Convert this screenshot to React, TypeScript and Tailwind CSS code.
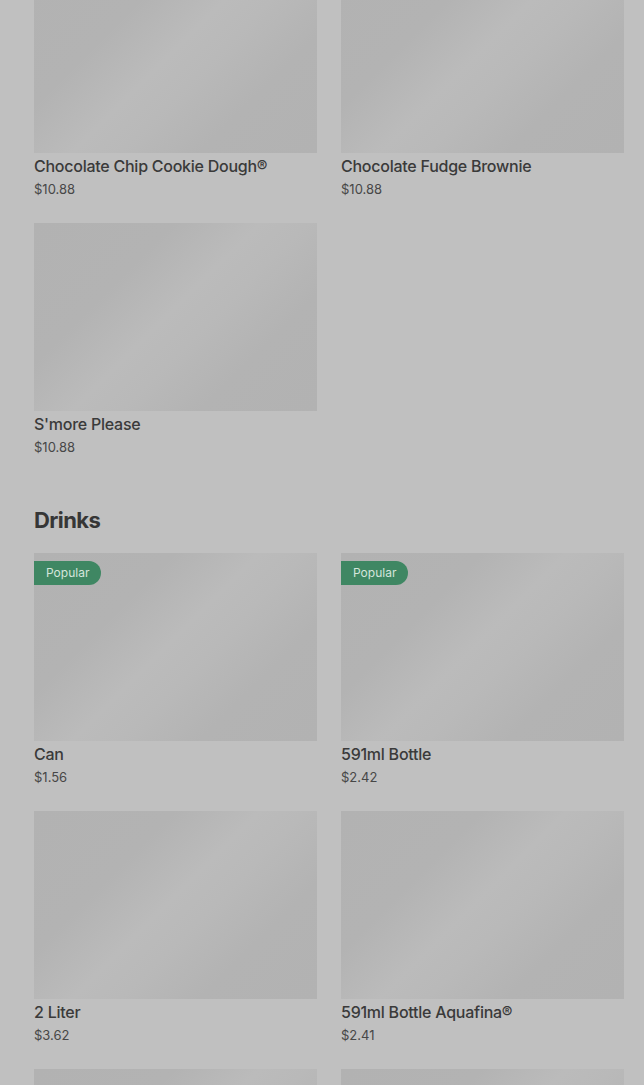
import React from "react";

type Item = { name: string; price: string; popular?: boolean };

const Placeholder = ({ popular }: { popular?: boolean }) => (
  <div className="relative h-[188px] w-full bg-[linear-gradient(135deg,#b2b2b2_0%,#b3b3b3_30%,#bbbbbb_48%,#b9b9b9_58%,#b3b3b3_75%,#b2b2b2_100%)]">
    {popular && (
      <div className="absolute left-0 top-[8px] flex h-[24px] items-center rounded-r-full bg-[#3f8763] pl-[12px] pr-[12px] text-[12px] leading-none text-[#d5e5dc]">
        Popular
      </div>
    )}
  </div>
);

const Card = ({ item }: { item: Item }) => (
  <div className="flex flex-col">
    <Placeholder popular={item.popular} />
    <div className="mt-[1px] h-[24px] text-[16px] font-medium leading-[24px] tracking-[-0.25px] text-[#3a3a3a]">
      {item.name}
    </div>
    <div className="h-[22px] text-[13px] leading-[22px] text-[#474747]">{item.price}</div>
  </div>
);

const Grid = ({ items }: { items: Item[] }) => (
  <div className="grid grid-cols-2 gap-x-[24px] gap-y-[23px]">
    {items.map((it, i) => (
      <Card key={i} item={it} />
    ))}
  </div>
);

export default function App() {
  return (
    <div
      className="h-[1085px] overflow-hidden bg-[#c0c0c0] pl-[34px] pr-[20px]"
      style={{ fontFamily: "Inter, 'Noto Sans', sans-serif" }}
    >
      <div className="-mt-[35px]">
        <Grid
          items={[
            { name: "Chocolate Chip Cookie Dough®", price: "$10.88" },
            { name: "Chocolate Fudge Brownie", price: "$10.88" },
            { name: "S'more Please", price: "$10.88" },
          ]}
        />
        <h2 className="mt-[45px] mb-[16px] h-[34px] text-[22px] font-bold leading-[34px] tracking-[-0.6px] text-[#363636]">
          Drinks
        </h2>
        <Grid
          items={[
            { name: "Can", price: "$1.56", popular: true },
            { name: "591ml Bottle", price: "$2.42", popular: true },
            { name: "2 Liter", price: "$3.62" },
            { name: "591ml Bottle Aquafina®", price: "$2.41" },
          ]}
        />
        <div className="mt-[23px] grid grid-cols-2 gap-x-[24px]">
          <Placeholder />
          <Placeholder />
        </div>
      </div>
    </div>
  );
}
